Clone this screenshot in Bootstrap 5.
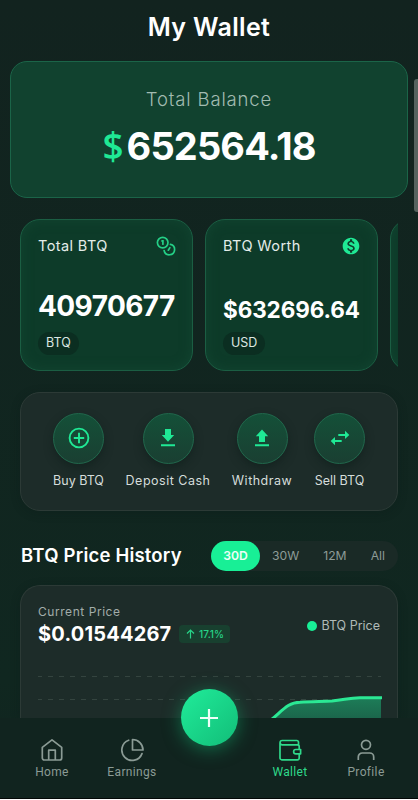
<!DOCTYPE html>
<html lang="en">
<head>
<meta charset="utf-8">
<meta name="viewport" content="width=device-width, initial-scale=1">
<title>My Wallet</title>
<link href="https://cdn.jsdelivr.net/npm/bootstrap@5.3.0/dist/css/bootstrap.min.css" rel="stylesheet">
<style>
:root{--mint:#1fe995;--ink:#11241e;--panel:#1d2c29}
body{background:#fff;color:#fff;font-family:Inter,"Liberation Sans",sans-serif;line-height:1.2}
svg{display:block;flex:none}
.phone{height:799px;background:linear-gradient(180deg,#12231f,#102720 85%,#11241f)}
.page-title{height:61px;padding-top:12px;font-size:25px;letter-spacing:.35px;font-weight:600;line-height:30px}
.balance{height:137px;margin:0 10px;background:#11422f;border:1px solid #1b6448;border-radius:17px}
.balance-label{font-size:18.5px;letter-spacing:.85px;font-weight:350;color:#a2bbb1;line-height:24px;margin-top:25px}
.balance-sum{font-size:38px;font-weight:700;letter-spacing:-.86px;line-height:46px;margin-top:12px}
.balance-sum .cur{font-family:"Open Sans",sans-serif;font-weight:600;font-size:37px;letter-spacing:0;color:var(--mint);margin-right:3px}
.coins{margin:21px 20px 0;gap:12px}
.coin{width:173px;height:152px;border:1px solid #1b5e43;border-radius:20px;padding:16px 16px 0 17px;background:#0d3b29;box-shadow:inset 0 0 12px #124531}
.coin-name{font-size:14.5px;letter-spacing:.4px;color:#e4ede9;line-height:20px}
.coin-sum{height:40px;margin-top:30px;font-weight:750;font-size:28px;line-height:41px;letter-spacing:-.6px;white-space:nowrap}
.coin-sum.fit{font-size:22.5px;letter-spacing:-.1px;line-height:48px}
.unit{display:inline-block;height:23px;margin-top:6px;background:#0b2e21;border-radius:12px;padding:0 8px;font-size:12.5px;line-height:22px;color:#dbe6e1}
.panel{background:var(--panel);border:1px solid #2c3a36;box-shadow:0 2px 10px #0a1b164d}
.actions{height:119px;margin:20.500px 20px 0;border-radius:20px;gap:22px;padding-top:20px}
.action{font-size:12.5px;color:#d5dddb;white-space:nowrap}
.disc{width:51px;height:51px;border-radius:50%;border:1px solid #20684c;background:linear-gradient(#145038,#1a3f32);box-shadow:0 4px 9px #0b1c1780;color:var(--mint);margin-bottom:9px}
.w51{width:51px}.w84{width:84px}.w60{width:60px}
.w84,.w60{letter-spacing:.5px}
.hist{height:30px;margin:30.500px 20px 14px}
.hist h2{font-size:18.5px;font-weight:570;letter-spacing:.2px;line-height:28px;padding-left:1px}
.ranges{width:187px;height:30px;border-radius:15px;background:#1a2a26;font-size:12.2px;line-height:30px;color:#8d9b97}
.ranges .on{width:49px;border-radius:15px;background:#18ef96;color:#edfff7;font-weight:600;text-align:center}
.ranges .opt{margin-left:12px}
.ranges .opt + .opt{margin-left:24px}
.chart{height:133px;margin:0 20px;border-radius:20px 20px 0 0;border-bottom:0;padding:17px 17px 0}
.cap{font-size:12px;letter-spacing:.55px;color:#a2adaa;line-height:18px}
.price{font-size:20px;font-weight:650;letter-spacing:.2px;line-height:26px}
.up{width:51px;height:18px;border-radius:4px;background:#18402f;color:#27d488;font-size:10px;font-weight:500;gap:4px;margin-left:8px}
.legend{font-size:12.5px;color:#b0bab7;gap:4px;margin-top:1px}
.dot{width:10px;height:10px;border-radius:50%;background:#18ef96}
.plot{margin-top:24px}
.tabs{height:81px;background:#11241f;border-bottom:1px solid #030806;font:12px/14px Roboto,sans-serif;letter-spacing:.35px;color:#8b9b95;padding:20px 14px 0 12px}
.tab{width:80px}
.tab.edge{width:76px}
.tab svg{margin-bottom:3px}
.tab.active{color:#2fd98b}
.fab{left:180.500px;top:-29px;width:57px;height:57px;border-radius:50%;background:linear-gradient(135deg,#20ec9a,#12bd78);box-shadow:0 3px 18px #11b87480}
.thumb{right:0;top:79px;width:4px;height:133px;background:#56635f;border-radius:3px 0 0 3px}
</style>
</head>
<body>
<main class="phone position-relative overflow-hidden d-flex flex-column">
  <h1 class="page-title text-center mb-0">My Wallet</h1>
  <section class="balance d-flex flex-column align-items-center flex-shrink-0">
    <div class="balance-label">Total Balance</div>
    <div class="balance-sum"><span class="cur">$</span>652564.18</div>
  </section>

  <section class="coins d-flex overflow-hidden flex-shrink-0">
    <article class="coin flex-shrink-0">
      <div class="d-flex justify-content-between align-items-center">
        <span class="coin-name">Total BTQ</span>
        <svg width="20" height="20" viewBox="0 0 20 20" fill="none" stroke="#24cf86" stroke-width="1.7" stroke-linecap="round"><circle cx="6.7" cy="6.600" r="5.3"/><path d="M6 4.900h.9v3.300M14.400 8.300a5.300 5.300 0 1 1-6.300 6.200M13.900 11.600l-1.600 2.600"/></svg>
      </div>
      <div class="coin-sum">40970677</div>
      <span class="unit">BTQ</span>
    </article>
    <article class="coin flex-shrink-0">
      <div class="d-flex justify-content-between align-items-center">
        <span class="coin-name">BTQ Worth</span>
        <svg width="20" height="20" viewBox="0 0 24 24"><path fill="#1fe995" d="M12 2C6.480 2 2 6.480 2 12s4.480 10 10 10 10-4.480 10-10S17.520 2 12 2zm1.410 16.090V20h-2.670v-1.930c-1.710-.36-3.160-1.460-3.270-3.400h1.960c.1 1.050.82 1.870 2.650 1.870 1.960 0 2.400-.98 2.400-1.590 0-.83-.44-1.610-2.670-2.140-2.480-.6-4.180-1.620-4.180-3.670 0-1.720 1.390-2.840 3.110-3.210V4h2.670v1.950c1.860.45 2.790 1.860 2.850 3.390H14.300c-.05-1.110-.64-1.870-2.220-1.870-1.500 0-2.400.68-2.400 1.640 0 .84.65 1.390 2.670 1.910s4.180 1.390 4.180 3.910c-.01 1.830-1.380 2.830-3.120 3.160z"/></svg>
      </div>
      <div class="coin-sum fit">$632696.64</div>
      <span class="unit">USD</span>
    </article>
    <article class="coin flex-shrink-0"></article>
  </section>

  <section class="panel actions d-flex justify-content-center flex-shrink-0">
    <div class="action w51 d-flex flex-column align-items-center"><span class="disc d-flex align-items-center justify-content-center"><svg width="22" height="22" viewBox="0 0 22 22" fill="none" stroke="currentColor" stroke-width="1.9"><circle cx="11" cy="11" r="9.400"/><path d="M11 5.800v10.400M5.800 11h10.400"/></svg></span>Buy BTQ</div>
    <div class="action w84 d-flex flex-column align-items-center"><span class="disc d-flex align-items-center justify-content-center"><svg width="22" height="22" viewBox="0 0 22 22" fill="currentColor"><path d="M8 2h6v6h3.200L11 14.800 4.800 8H8zM4 17.200h14v2H4z"/></svg></span>Deposit Cash</div>
    <div class="action w60 d-flex flex-column align-items-center"><span class="disc d-flex align-items-center justify-content-center"><svg width="22" height="22" viewBox="0 0 22 22" fill="currentColor"><path d="M8 15h6V9.200h3.200L11 2.500 4.800 9.200H8zM4 17.200h14v2H4z"/></svg></span>Withdraw</div>
    <div class="action w51 d-flex flex-column align-items-center"><span class="disc d-flex align-items-center justify-content-center"><svg width="22" height="22" viewBox="0 0 22 22" fill="currentColor"><path d="M9.300 7H16V3.700L20.300 7.900 16 12V8.900H9.300zM12.700 13.100H6V10L1.700 14.100 6 18.300V15h6.700z"/></svg></span>Sell BTQ</div>
  </section>

  <section class="hist d-flex justify-content-between flex-shrink-0">
    <h2 class="mb-0">BTQ Price History</h2>
    <div class="ranges d-flex"><span class="on">30D</span><span class="opt">30W</span><span class="opt">12M</span><span class="opt">All</span></div>
  </section>

  <section class="panel chart flex-shrink-0">
    <div class="d-flex justify-content-between align-items-center">
      <div>
        <div class="cap">Current Price</div>
        <div class="d-flex align-items-center">
          <span class="price">$0.01544267</span>
          <span class="up d-flex align-items-center justify-content-center"><svg width="9" height="10" viewBox="0 0 9 10" fill="none" stroke="currentColor" stroke-width="1.2"><path d="M4.500 9.500V1M1 4.500 4.500 1 8 4.500"/></svg>17.1%</span>
        </div>
      </div>
      <div class="legend d-flex align-items-center"><i class="dot"></i>BTQ Price</div>
    </div>
    <svg class="plot" width="344" height="48" viewBox="38 671 344 48">
      <defs><linearGradient id="area" x1="0" y1="0" x2="0" y2="1"><stop offset="0" stop-color="#1d7d58"/><stop offset="1" stop-color="#1b644a"/></linearGradient></defs>
      <path d="M37 676.500H381M37 699.500H381" stroke="#34443f" stroke-dasharray="5 6"/>
      <path d="M273 719.500C283 710 288 702.500 300 702.200C312 701.500 322 701.500 332 701C344 700 349 697.700 360 697.700H381V720H273z" fill="url(#area)"/>
      <path d="M271 720C283 710 288 702.500 300 702.200C312 701.500 322 701.500 332 701C344 700 349 697.700 360 697.700H382" fill="none" stroke="#2be894" stroke-width="3"/>
    </svg>
  </section>

  <nav class="tabs position-relative d-flex flex-shrink-0">
    <div class="tab d-flex flex-column align-items-center"><svg width="24" height="24" viewBox="0 0 24 24" fill="none" stroke="currentColor" stroke-width="1.700" stroke-linejoin="round"><path d="M2.300 9.300 12 1.800l9.700 7.500V20a2 2 0 0 1-2 2H4.300a2 2 0 0 1-2-2zM8.700 22V12.200h6.600V22"/></svg>Home</div>
    <div class="tab d-flex flex-column align-items-center"><svg width="24" height="24" viewBox="0 0 24 24" fill="none" stroke="currentColor" stroke-width="1.700" stroke-linejoin="round" stroke-linecap="round"><path d="M8.700 2.200A10.400 10.400 0 1 0 22 15.600M12.500 1.500V12H23A10.500 10.500 0 0 0 12.500 1.500z"/></svg>Earnings</div>
    <div class="tab"></div>
    <div class="tab active edge d-flex flex-column align-items-center"><svg width="24" height="24" viewBox="0 0 24 24" fill="none" stroke="currentColor" stroke-width="1.700" stroke-linejoin="round"><path d="M20.500 6.800V4.200a1.700 1.700 0 0 0-1.700-1.700H4.200a2.150 2.150 0 0 0 0 4.300h15.300a1.700 1.700 0 0 1 1.700 1.700v3M2 4.600V20a1.800 1.800 0 0 0 1.800 1.800h15.700a1.700 1.700 0 0 0 1.700-1.700v-4.300M22.600 11.500h-4.800a2.150 2.150 0 0 0 0 4.300h4.800z"/></svg>Wallet</div>
    <div class="tab edge d-flex flex-column align-items-center flex-shrink-0"><svg width="24" height="24" viewBox="0 0 24 24" fill="none" stroke="currentColor" stroke-width="1.700"><circle cx="12" cy="6.800" r="4.500"/><path d="M4.300 22v-3a4 4 0 0 1 4-4h7.400a4 4 0 0 1 4 4v3"/></svg>Profile</div>
    <div class="fab position-absolute d-flex align-items-center justify-content-center"><svg width="20" height="20" viewBox="0 0 20 20" stroke="#effff8" stroke-width="2.200"><path d="M10 1v18M1 10h18"/></svg></div>
  </nav>
  <div class="thumb position-absolute"></div>
</main>
</body>
</html>
